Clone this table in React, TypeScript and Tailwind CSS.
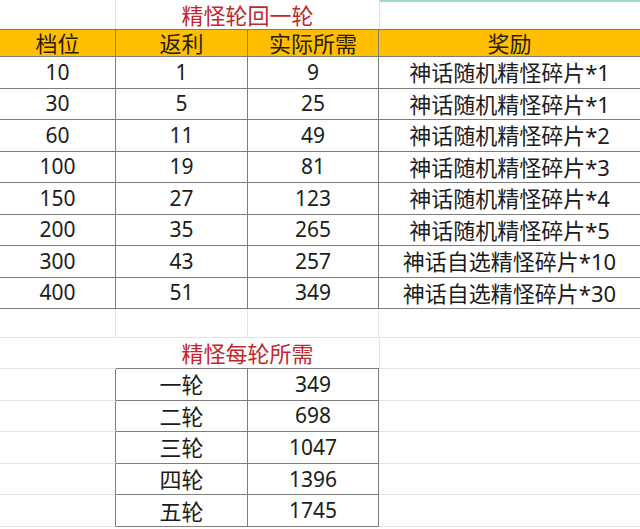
const font = { fontFamily: '"Noto Sans", "Noto Sans CJK SC", sans-serif' }

const tiers = [
  ['10', '1', '9', '神话随机精怪碎片*1'],
  ['30', '5', '25', '神话随机精怪碎片*1'],
  ['60', '11', '49', '神话随机精怪碎片*2'],
  ['100', '19', '81', '神话随机精怪碎片*3'],
  ['150', '27', '123', '神话随机精怪碎片*4'],
  ['200', '35', '265', '神话随机精怪碎片*5'],
  ['300', '43', '257', '神话自选精怪碎片*10'],
  ['400', '51', '349', '神话自选精怪碎片*30'],
]

const rounds = [
  ['一轮', '349'],
  ['二轮', '698'],
  ['三轮', '1047'],
  ['四轮', '1396'],
  ['五轮', '1745'],
]

const cols = 'grid grid-cols-[116px_132px_131px_1fr]'
const cell = 'flex items-center justify-center'

export default function App() {
  return (
    <div className="w-[640px] h-[529px] bg-white overflow-hidden text-[21px] text-[#1c1c1c]" style={font}>
      {/* title 1 */}
      <div className={`${cols} h-[29px]`}>
        <div className="border-r border-[#e4e4e4]" />
        <div className={`${cell} col-span-2 text-[22px] text-[#c4262e] leading-none`}>精怪轮回一轮</div>
        <div className="border-l border-[#e4e4e4] border-t-2 border-t-[#9fd8cf]" />
      </div>

      {/* header */}
      <div className={`${cols} h-[28px] bg-[#ffbf00] border-y-[1.5px] border-[#7d7d7d] text-[22px] text-[#2a1c00] leading-none`}>
        {['档位', '返利', '实际所需', '奖励'].map((h, i) => (
          <div key={h} className={`${cell} ${i < 3 ? 'border-r-[1.5px] border-[#7d7d7d]' : ''}`}>{h}</div>
        ))}
      </div>

      {/* rows */}
      {tiers.map((r) => (
        <div key={r[0]} className={`${cols} h-[31.5px] border-b-[1.5px] border-[#7d7d7d] leading-none`}>
          {r.map((v, i) => (
            <div
              key={i}
              className={`${cell} ${i < 3 ? 'border-r-[1.5px] border-[#7d7d7d]' : 'text-[22px]'}`}
            >
              {v}
            </div>
          ))}
        </div>
      ))}

      {/* spacer row */}
      <div className={`${cols} h-[29px]`}>
        <div className="border-r border-b border-[#e4e4e4]" />
        <div className="border-r border-b border-[#e4e4e4]" />
        <div className="border-r border-b border-[#e4e4e4]" />
        <div className="border-b border-[#e4e4e4]" />
      </div>

      {/* title 2 */}
      <div className={`${cols} h-[31px]`}>
        <div className="border-b border-[#e4e4e4]" />
        <div className={`${cell} col-span-2 text-[22px] text-[#c4262e] leading-none border-b-[1.5px] border-[#7d7d7d]`}>
          精怪每轮所需
        </div>
        <div className="border-b border-l border-[#e4e4e4]" />
      </div>

      {/* rounds */}
      {rounds.map(([name, total]) => (
        <div key={name} className={`${cols} h-[31.6px] leading-none`}>
          <div className="border-b border-[#e4e4e4] border-r-[1.5px] border-r-[#7d7d7d]" />
          <div className={`${cell} text-[22px] border-r-[1.5px] border-b-[1.5px] border-[#7d7d7d]`}>{name}</div>
          <div className={`${cell} border-r-[1.5px] border-b-[1.5px] border-[#7d7d7d]`}>{total}</div>
          <div className="border-b border-[#e4e4e4]" />
        </div>
      ))}
    </div>
  )
}
